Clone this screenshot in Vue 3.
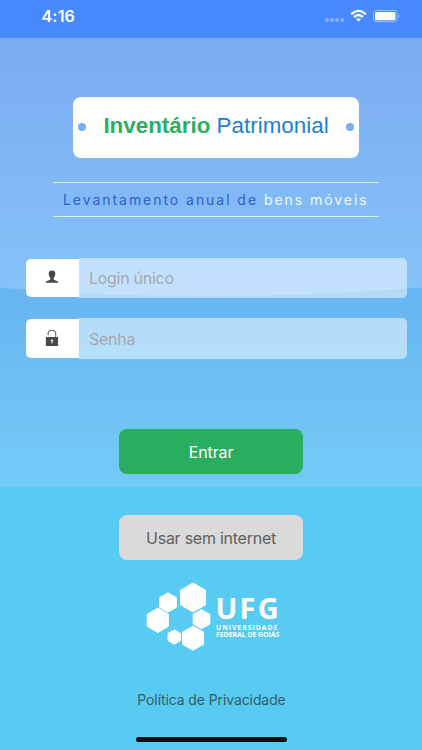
<script setup>
import { ref } from 'vue'

const login = ref('')
const password = ref('')

const hexagons = [
  { x: 53, y: 22.5, r: 14.5 },
  { x: 28, y: 27.5, r: 9.7 },
  { x: 17.8, y: 45.3, r: 12.2 },
  { x: 61.5, y: 44.2, r: 9.6 },
  { x: 34.3, y: 62, r: 7.2 },
  { x: 53, y: 63.2, r: 12.1 },
]

function hexPoints({ x, y, r }) {
  return Array.from({ length: 6 }, (_, i) => {
    const a = (Math.PI / 3) * i + Math.PI / 6
    return `${(x + r * Math.cos(a)).toFixed(2)},${(y + r * Math.sin(a)).toFixed(2)}`
  }).join(' ')
}
</script>

<template>
  <div class="screen">
    <svg class="backdrop" viewBox="0 0 422 750" aria-hidden="true">
      <defs>
        <linearGradient id="sky" gradientUnits="userSpaceOnUse" x1="0" y1="38" x2="0" y2="297">
          <stop offset="0" stop-color="#7babf2" />
          <stop offset="1" stop-color="#85c3f8" />
        </linearGradient>
        <linearGradient id="sea" gradientUnits="userSpaceOnUse" x1="0" y1="288" x2="0" y2="487">
          <stop offset="0" stop-color="#67b5f2" />
          <stop offset="1" stop-color="#74cbf6" />
        </linearGradient>
      </defs>
      <rect width="422" height="300" fill="url(#sky)" />
      <path d="M0 287.5C130 299 280 299 422 287.5V488H0Z" fill="url(#sea)" />
      <rect y="486.5" width="422" height="264" fill="#57cbf2" />
    </svg>

    <header class="status">
      <span class="time">4:16</span>
      <svg class="indicators" width="78" height="16" viewBox="0 0 78 16">
        <g fill="#fff" fill-opacity=".35">
          <circle cx="4" cy="12" r="2" /><circle cx="9" cy="12" r="2" />
          <circle cx="14" cy="12" r="2" /><circle cx="19.2" cy="12" r="2" />
        </g>
        <g fill="none" stroke="#fff" stroke-width="2.3">
          <path d="M28.2 6.3Q35.5 -.6 42.8 6.3" />
          <path d="M31 9.2Q35.5 4.9 40 9.2" />
        </g>
        <path d="M33.1 11.2Q35.5 9.1 37.9 11.2L35.5 13.7Z" fill="#fff" />
        <rect x="50.6" y="2.5" width="23.6" height="11.2" rx="3" fill="none" stroke="#fff" stroke-opacity=".45" />
        <rect x="52" y="3.9" width="20.4" height="8.4" rx="1.6" fill="#fff" />
        <path d="M75.5 6Q77.5 8 75.5 10Z" fill="#fff" fill-opacity=".45" />
      </svg>
    </header>

    <main class="content">
      <h1 class="plate">
        <i class="hole"></i>
        <span class="title"><b>Inventário</b> Patrimonial</span>
        <i class="hole"></i>
      </h1>

      <p class="tagline"><span>Levantamento anual de</span> bens móveis</p>

      <form class="form" @submit.prevent>
        <div class="field">
          <span class="addon">
            <svg width="14" height="14" viewBox="0 0 14 14" fill="#484848">
              <path d="M7 .6C9.2 .6 10.3 1.8 10.3 3.8C10.3 5.7 9.5 7 8.7 7.9V9.4C9.5 10.4 13.2 10.4 13.4 12.8H.6C.8 10.4 4.5 10.4 5.3 9.4V7.9C4.5 7 3.7 5.7 3.7 3.8C3.7 1.8 4.8 .6 7 .6Z" />
            </svg>
          </span>
          <input v-model="login" class="login" type="text" placeholder="Login único" />
        </div>
        <div class="field">
          <span class="addon">
            <svg class="lock" width="14" height="18" viewBox="0 0 14 18">
              <path d="M3.1 6V4.6C3.1 2.5 4.7 1.2 6.9 1.2S10.7 2.5 10.7 4.6V8.5" fill="none" stroke="#666" stroke-width="1.1" />
              <rect x=".9" y="8" width="12.2" height="8.9" rx=".5" fill="#484848" />
              <path d="M7 10.3a1.4 1.4 0 0 1 .6 2.6V14.6H6.4V12.9A1.4 1.4 0 0 1 7 10.3Z" fill="#ccc" />
            </svg>
          </span>
          <input v-model="password" class="password" type="password" placeholder="Senha" />
        </div>
        <button class="button enter" type="submit"><span>Entrar</span></button>
      </form>

      <button class="button offline" type="button"><span>Usar sem internet</span></button>

      <div class="logo">
        <svg width="76" height="80" viewBox="0 0 76 80" fill="#fff" stroke="#fff" stroke-linejoin="round">
          <polygon v-for="(h, i) in hexagons" :key="i" :points="hexPoints(h)" />
        </svg>
        <div class="wordmark">
          <span class="initials">UFG</span>
          <span class="university">UNIVERSIDADE</span>
          <span class="place">FEDERAL DE GOIÁS</span>
        </div>
      </div>

      <a class="privacy">Política de Privacidade</a>
    </main>

    <div class="home-bar"></div>
  </div>
</template>

<style>
body {
  margin: 0;
}
</style>

<style scoped>
.screen {
  position: relative;
  display: flex;
  flex-direction: column;
  width: 422px;
  height: 750px;
  overflow: hidden;
  font-family: Inter, "Liberation Sans", sans-serif;
}
.backdrop {
  position: absolute;
  inset: 0;
}
.status,
.content,
.home-bar {
  position: relative;
}
.status {
  display: flex;
  justify-content: space-between;
  box-sizing: border-box;
  height: 37.5px;
  padding: 8px 21px 0 41.5px;
  background: #4789fe;
  color: #fff;
}
.time {
  font-size: 16px;
  line-height: 17px;
  font-weight: 600;
  letter-spacing: .2px;
}
.content {
  display: flex;
  flex: 1;
  flex-direction: column;
  align-items: center;
}
.plate {
  display: flex;
  align-items: center;
  justify-content: space-between;
  box-sizing: border-box;
  width: 286px;
  height: 60.5px;
  margin: 59.5px 0 0 10px;
  padding: 0 5px;
  border-radius: 8px;
  background: #fff;
  font: 22.4px/28px "Liberation Sans", sans-serif;
  color: #1b80d3;
}
.hole {
  width: 8px;
  height: 8px;
  border-radius: 50%;
  background: #79abf0;
}
.title {
  padding-bottom: 3px;
  white-space: nowrap;
}
.title b {
  color: #2cae62;
}
.tagline {
  box-sizing: border-box;
  width: 326px;
  height: 34.5px;
  margin: 24.5px 0 0 10px;
  padding-left: 10px;
  border: solid #d9efff;
  border-width: 1.5px 0;
  font-size: 14px;
  line-height: 33px;
  letter-spacing: 1.95px;
  white-space: nowrap;
  color: #f0f8ff;
}
.tagline span {
  color: #315dca;
}
.form {
  display: flex;
  flex-direction: column;
  align-items: center;
  gap: 20px;
  margin-top: 41px;
}
.field {
  display: flex;
  align-items: center;
  width: 381.5px;
  margin-left: 10.5px;
}
.addon {
  display: flex;
  align-items: center;
  justify-content: center;
  box-sizing: border-box;
  width: 53.5px;
  height: 38.5px;
  padding-bottom: 1px;
  border-radius: 5px 0 0 5px;
  background: #fff;
}
input {
  box-sizing: border-box;
  flex: 1;
  height: 40.5px;
  min-width: 0;
  padding: 1px 10px 0;
  border: 0;
  border-radius: 0 5px 5px 0;
  outline: 0;
  background: rgba(255, 255, 255, .5);
  font: 16px Inter, sans-serif;
  letter-spacing: -.28px;
}
input::placeholder {
  color: #a5a9ad;
  opacity: 1;
}
.button {
  width: 183.5px;
  height: 45px;
  padding: 1px 0 0;
  border: 0;
  border-radius: 8px;
  font: 16px/44px Inter, sans-serif;
  letter-spacing: -.25px;
}
.enter {
  margin-top: 50px;
  background: #29ad5e;
  color: #fff;
  letter-spacing: -.1px;
}
.offline {
  margin-top: 41px;
  background: #dadada;
  color: #606060;
}
.logo {
  display: flex;
  width: 150px;
  height: 80px;
  margin: 15.5px 0 0 8px;
}
.wordmark {
  display: flex;
  flex-direction: column;
  padding-top: 17.5px;
  font-family: "Open Sans", "Noto Sans", sans-serif;
  font-weight: 700;
  font-size: 6.9px;
  line-height: 7px;
  white-space: nowrap;
  color: #fff;
}
.initials {
  margin-left: -.5px;
  font-size: 29px;
  line-height: 30px;
  letter-spacing: 2.2px;
}
.university {
  padding-top: 1.5px;
  letter-spacing: .95px;
}
.place {
  letter-spacing: -.02px;
}
.privacy {
  margin: 35px 0 0 1px;
  font-size: 14px;
  line-height: 20px;
  letter-spacing: -.1px;
  color: #355c69;
}
.home-bar {
  align-self: center;
  width: 151px;
  height: 5px;
  margin-bottom: 8.5px;
  border-radius: 3px;
  background: #061014;
}
</style>
